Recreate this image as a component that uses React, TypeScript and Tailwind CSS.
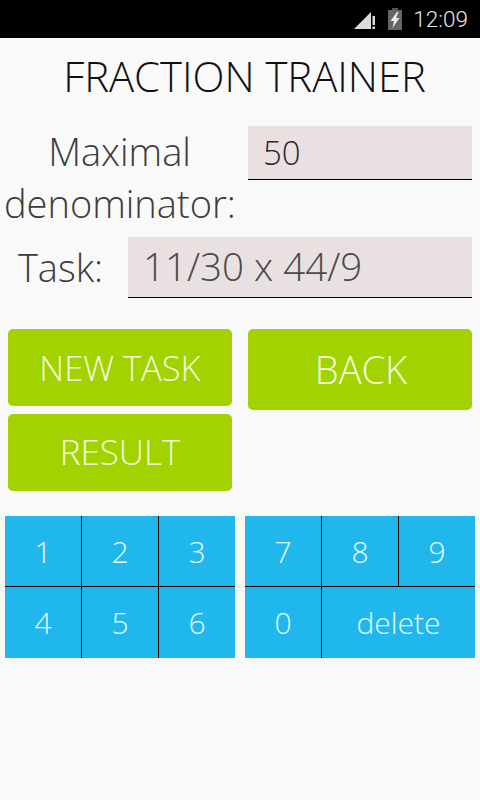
const font = "font-['Open_Sans',sans-serif] font-light"

function StatusBar() {
    return (
        <div className="flex h-[38px] items-center justify-end bg-black pr-[12px]">
            {/* Signal */}
            <svg width="22" height="20" viewBox="0 0 22 20" className="mr-[12px]">
                <path d="M0 20 L17 3 L17 20 Z" fill="#dcdcdc" />
                <rect x="18.5" y="7" width="2.5" height="9" fill="#dcdcdc" />
                <rect x="18.5" y="17.5" width="2.5" height="2.5" fill="#dcdcdc" />
            </svg>
            {/* Battery */}
            <svg width="14" height="22" viewBox="0 0 14 22" className="mr-[11px]">
                <rect x="4" y="0" width="6" height="2" fill="#555555" />
                <rect x="0" y="2" width="14" height="20" fill="#666666" />
                <path d="M9 4 L2.5 13 L6 13 L4.5 20 L11.5 10 L8 10 L10.5 4 Z" fill="#ececec" />
            </svg>
            <span className="font-['Roboto',sans-serif] text-[22.5px] leading-none text-[#e6e6e6]">12:09</span>
        </div>
    )
}

function ActionButton({ label, size, height }: { label: string; size: string; height: string }) {
    return (
        <button className={`${font} ${size} ${height} flex w-[224px] items-center justify-center rounded-[5px] bg-[#a2d200] text-[#f4fbdc]`}>
            {label}
        </button>
    )
}

function Key({ label, wide, right, bottom }: { label: string; wide?: boolean; right?: boolean; bottom?: boolean }) {
    return (
        <div
            className={`flex items-center justify-center text-[30px] text-[#e8f7fd] ${font} ${wide ? "col-span-2" : ""} ${right ? "border-r border-black" : ""} ${bottom ? "border-b border-black" : ""}`}
        >
            {label}
        </div>
    )
}

export default function App() {
    return (
        <div className={`h-[800px] w-[480px] overflow-hidden bg-[#f9f9f9] ${font}`}>
            <StatusBar />
            <h1 className="mt-[10px] h-[56px] pl-[9px] text-center text-[41.8px] leading-[56px] text-[#111111]">FRACTION TRAINER</h1>

            <div className="mt-[22px] flex items-start">
                <div className="-mt-[1px] ml-[4px] w-[231px] text-center text-[38px] leading-[52px] whitespace-nowrap text-[#3c3c3c]">
                    Maximal
                    <br />
                    denominator:
                </div>
                <div className="ml-[13px] flex h-[54px] w-[224px] items-center border-b border-black bg-[#e9e0e1] pl-[15px] text-[33px] text-[#2a2a2a]">
                    50
                </div>
            </div>

            <div className="mt-[8px] flex items-center">
                <div className="w-[120px] pl-[1px] text-center text-[38px] text-[#3c3c3c]">Task:</div>
                <div className="ml-[8px] flex h-[61px] w-[344px] items-center border-b border-black bg-[#e9e0e1] pl-[15px] text-[38.5px] text-[#4a4a4a]">
                    11/30 x 44/9
                </div>
            </div>

            <div className="mt-[31px] flex items-start gap-[16px] pl-[8px]">
                <div className="flex flex-col gap-[8px]">
                    <ActionButton label="NEW TASK" size="text-[34.5px]" height="h-[77px]" />
                    <ActionButton label="RESULT" size="text-[35px]" height="h-[77px]" />
                </div>
                <ActionButton label="BACK" size="pl-[2px] text-[38px]" height="h-[81px]" />
            </div>

            <div className="mt-[25px] flex gap-[10px] pl-[5px]">
                <div className="grid h-[142px] w-[230px] grid-cols-[77px_77px_76px] grid-rows-[71px_71px] bg-[#20b8ec]">
                    <Key label="1" right bottom />
                    <Key label="2" right bottom />
                    <Key label="3" bottom />
                    <Key label="4" right />
                    <Key label="5" right />
                    <Key label="6" />
                </div>
                <div className="grid h-[142px] w-[230px] grid-cols-[77px_77px_76px] grid-rows-[71px_71px] bg-[#20b8ec]">
                    <Key label="7" right bottom />
                    <Key label="8" right bottom />
                    <Key label="9" bottom />
                    <Key label="0" right />
                    <Key label="delete" wide />
                </div>
            </div>
        </div>
    )
}
